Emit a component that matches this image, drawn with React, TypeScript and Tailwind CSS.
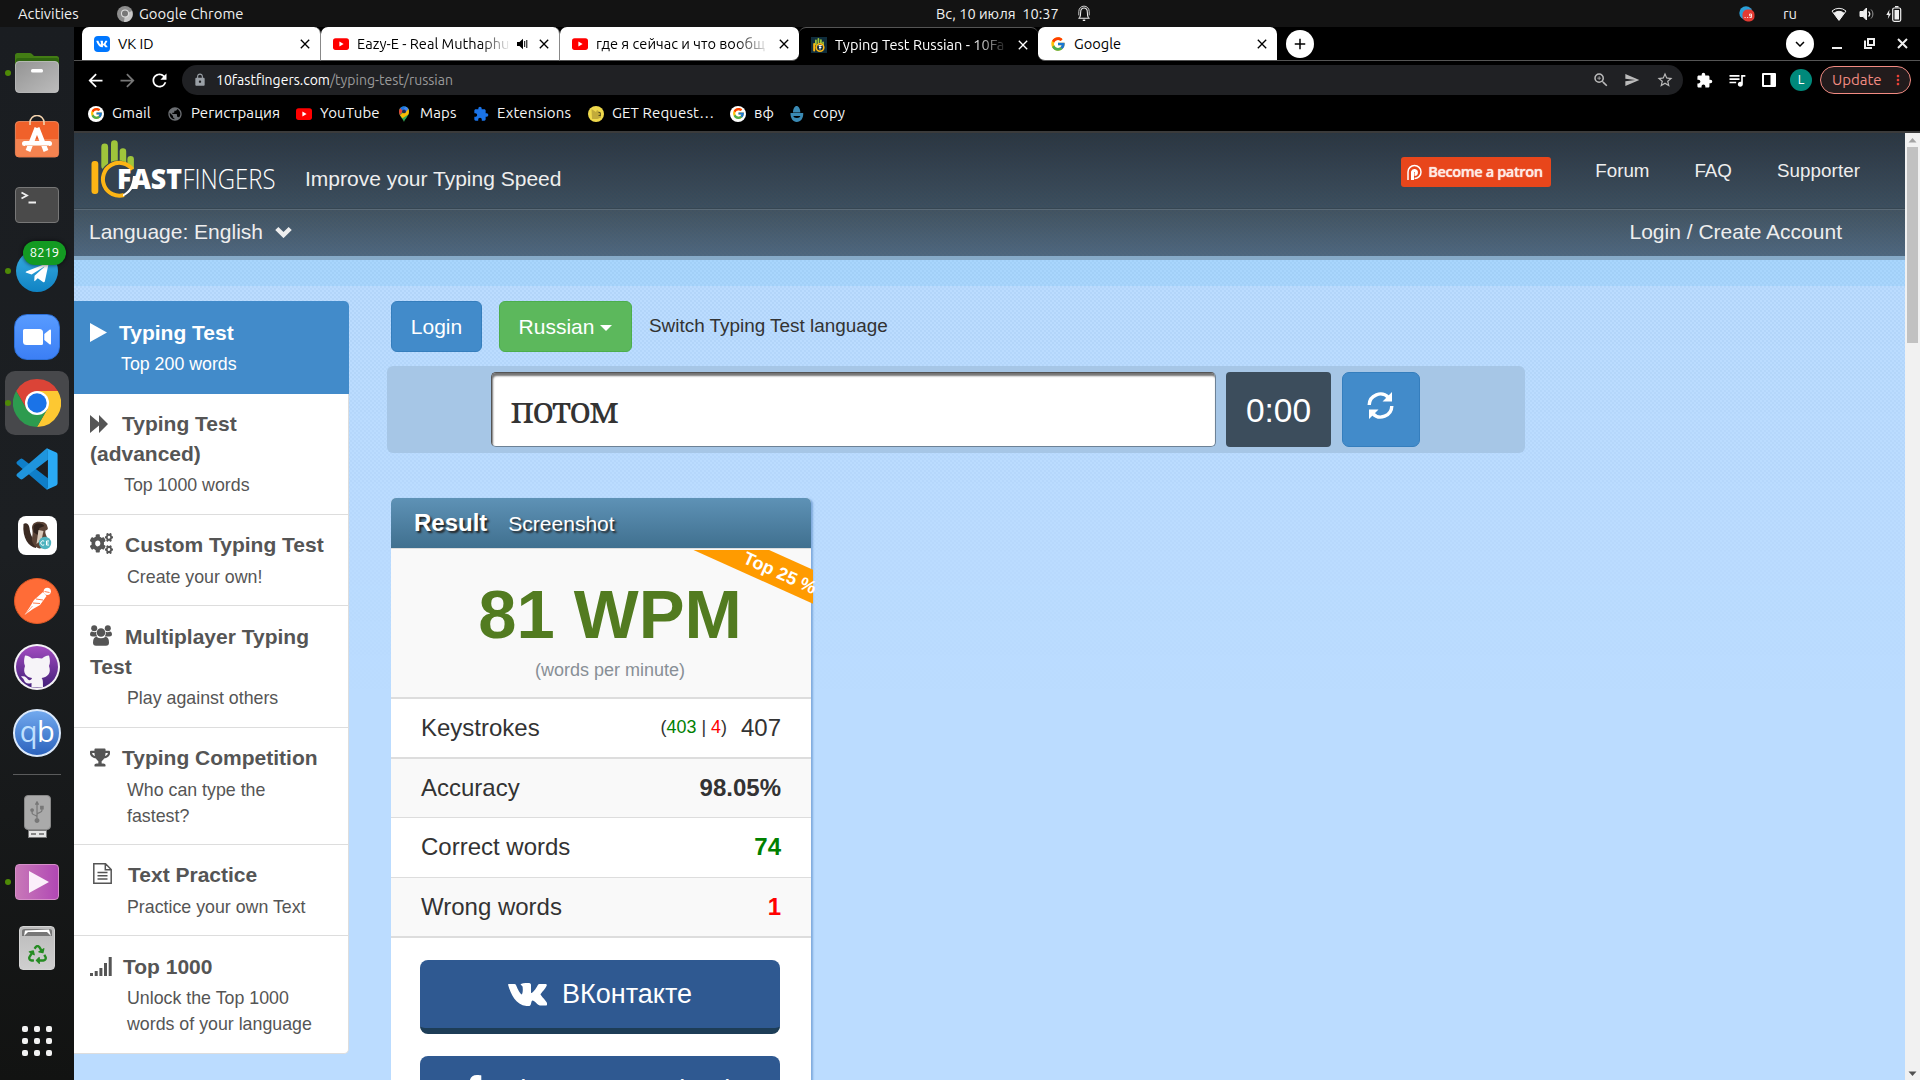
import React from 'react';
import {
  MdArrowBack, MdArrowForward, MdRefresh, MdLock, MdExtension, MdQueueMusic, MdSend,
  MdStarBorder, MdZoomIn, MdClose, MdAdd, MdExpandMore, MdMoreVert, MdPublic,
} from 'react-icons/md';
import {
  FaTelegramPlane, FaUsb, FaRecycle, FaVk, FaFacebookF, FaCogs, FaTrophy,
} from 'react-icons/fa';
import { FcGoogle } from 'react-icons/fc';

const UI = "font-['Ubuntu','Noto_Sans',sans-serif]";
const ARIAL = "font-['Liberation_Sans',Arial,sans-serif]";

/* ---------- small icons ---------- */

function YouTubeIcon() {
  return (
    <svg viewBox="0 0 16 16" className="h-4 w-4 shrink-0">
      <rect x="0" y="2.3" width="16" height="11.6" rx="2.6" fill="#f00" />
      <path d="M6.4 5.6 10.6 8.1 6.4 10.6Z" fill="#fff" />
    </svg>
  );
}

function VkIcon() {
  return (
    <span className="flex h-4 w-4 shrink-0 items-center justify-center rounded-[4px] bg-[#0077ff]">
      <FaVk className="h-3 w-3 text-white" />
    </span>
  );
}

function GoogleBadge() {
  return (
    <span className="flex h-4 w-4 shrink-0 items-center justify-center rounded-full bg-white">
      <FcGoogle className="h-[13px] w-[13px]" />
    </span>
  );
}

function FingersIcon() {
  return (
    <svg viewBox="0 0 16 16" className="h-4 w-4 shrink-0">
      <rect width="16" height="16" fill="#0f2d3c" />
      <g fill="#9fc53b">
        <rect x="4" y="2.5" width="1.8" height="6" rx=".9" />
        <rect x="6.5" y="1" width="1.8" height="6" rx=".9" />
        <rect x="9" y="2.2" width="1.8" height="6" rx=".9" />
        <rect x="11.3" y="4.5" width="1.6" height="5" rx=".8" />
      </g>
      <rect x="2.2" y="6" width="2" height="8.5" rx="1" fill="#fdb913" />
      <circle cx="9" cy="10.5" r="3.8" fill="#16303c" stroke="#fdb913" strokeWidth="1.6" />
      <path d="M7.6 8.6h3.2M9 8.6v4M8 10.5h2.4" stroke="#fff" strokeWidth="1" />
    </svg>
  );
}

function MapsPin() {
  return (
    <svg viewBox="0 0 16 16" className="h-4 w-4 shrink-0">
      <path d="M8 16C7.4 13 3 10 3 5.4A5 5 0 0 1 8 .4a5 5 0 0 1 5 5C13 10 8.600 13 8 16Z" fill="#34a853" />
      <path d="M3.700 2.800A5 5 0 0 1 9.600.6L5.500 6Z" fill="#1a73e8" />
      <path d="M3 5.400A5 5 0 0 1 4.200 2.200L7 5 4 9.300C3.400 8 3 6.800 3 5.400Z" fill="#ea4335" />
      <path d="M4 9.200 12 2.500C13.200 4.200 13.200 6.500 12.300 8.400L6.500 12.300Z" fill="#fbbc04" />
      <path d="M9.600.600A5 5 0 0 1 12.400 3L9.500 6.500 7 3.500Z" fill="#4285f4" />
      <circle cx="8" cy="5.400" r="1.900" fill="#1d2b4f" />
    </svg>
  );
}

function YellowBadge() {
  return (
    <svg viewBox="0 0 16 16" className="h-4 w-4 shrink-0">
      <circle cx="8" cy="8" r="8" fill="#efd94c" />
      <path d="M3.500 3 8 6l1-2 4 2.500v5L9.500 13H4Z" fill="#c2ab3a" />
      <path d="M10.500 6.500h1.800M10.500 9.500h1.800M12.300 7v3" stroke="#4b4318" strokeWidth=".9" />
    </svg>
  );
}

function CopyIcon() {
  return (
    <svg viewBox="0 0 16 16" className="h-4 w-4 shrink-0" fill="#3a8ab4">
      <path d="M4 6.500C4 2.500 5.800 0 7.600 0S11.300 2.500 11.300 6.500Z" />
      <path d="M1.500 7h12.700c.5 5-2.500 9-6.400 9S1.300 12 1.500 7Zm2.800 3c.3 1.300 1.700 2 3.600 2s3.200-.7 3.500-2Z" />
    </svg>
  );
}

function ChromeLogo({ className }: { className: string }) {
  return (
    <svg viewBox="0 0 48 48" className={className}>
      <path d="M24 12H44.785A24 24 0 0 0 3.215 12L13.600 30Z" fill="#db4437" />
      <path d="M34.400 30 24 48A24 24 0 0 0 44.785 12H24Z" fill="#fdc832" />
      <path d="M13.600 30 3.215 12A24 24 0 0 0 24 48L34.400 30Z" fill="#2d9b4f" />
      <circle cx="24" cy="24" r="12" fill="#fff" />
      <circle cx="24" cy="24" r="9.700" fill="#1a73e8" />
    </svg>
  );
}

function GroupIcon() {
  return (
    <svg viewBox="0 0 22 21" className="h-[21px] w-[22px]" fill="currentColor">
      <circle cx="4.200" cy="3.200" r="3" />
      <circle cx="17.800" cy="3.200" r="3" />
      <path d="M0 9.500C0 7.800 1 6.500 2 6.500 3.500 7.500 5 7.500 6.200 6.800 6 9 6.500 10.300 7.300 11.600H2.500Q0 11.600 0 9.500Z" />
      <path d="M22 9.500C22 7.800 21 6.500 20 6.500 18.500 7.500 17 7.500 15.800 6.800 16 9 15.500 10.300 14.700 11.600H19.500Q22 11.600 22 9.500Z" />
      <circle cx="11" cy="7.500" r="4.300" />
      <path d="M3 17.500C3 14 4.500 11.800 6.500 11.800 9.500 13.800 12.500 13.800 15.500 11.800 17.500 11.800 19 14 19 17.500Q19 20.700 16 20.700H6Q3 20.700 3 17.500Z" />
    </svg>
  );
}

/* ---------- desktop top bar ---------- */

function TopBar() {
  return (
    <div className={`${UI} flex h-[27px] shrink-0 items-center bg-[#131313] pt-px text-[14.800px] text-[#f0f0f0]`}>
      <div className="flex w-[640px] items-center pl-[18px]">
        <span className="w-[99px]">Activities</span>
        <svg viewBox="0 0 16 16" className="mr-[6px] h-4 w-4">
          <circle cx="8" cy="8" r="8" fill="#8d8d8d" />
          <path d="M8 8 15 5A8 8 0 0 1 7 16Z" fill="#c9c9c9" />
          <circle cx="8" cy="7.500" r="4" fill="#e0e0e0" />
          <circle cx="8" cy="7.500" r="3" fill="#777" />
        </svg>
        <span className="tracking-[0.050px]">Google Chrome</span>
      </div>
      <div className="flex w-[640px] items-center pb-px pl-[296px]">
        <span className="w-[140px] whitespace-pre text-[14.600px]">Вс, 10 июля  10:37</span>
        <svg viewBox="0 0 16 18" className="h-[17px] w-4" fill="none" stroke="#f0f0f0" strokeWidth="1.100">
          <path d="M2 14H14M3.300 13.500C4.500 12 4.500 10.500 4.500 7.500 4.500 4.800 6 3.200 8 3.200S11.500 4.800 11.500 7.500C11.500 10.500 11.500 12 12.700 13.500" />
          <path d="M2.500 11V7C2.500 3.500 5 1.200 8 1.200S13.500 3.500 13.500 7V11" strokeWidth=".9" />
          <path d="M6.700 16.200h2.600" strokeWidth="1.500" />
        </svg>
      </div>
      <div className="flex flex-1 items-center pb-px pl-[459px]">
        <svg viewBox="0 0 16 16" className="mr-[28px] h-4 w-4">
          <circle cx="7" cy="7" r="6.700" fill="#2a9fd8" />
          <rect x="3.500" y="3.500" width="12" height="12" rx="5" fill="#e33b33" />
          <path d="M5.500 11.500h1.200M8 11.500h1.200M10.500 8h2v3.500h-2M10.500 8v1.800h2" stroke="#fff" strokeWidth=".8" fill="none" />
        </svg>
        <span className="w-[48px] pt-px">ru</span>
        <svg viewBox="0 0 16 16" className="mr-[12px] h-4 w-4" fill="none" stroke="#f0f0f0">
          <path d="M1 5A10.500 10.500 0 0 1 15 5L8 14.500Z" strokeWidth="1" />
          <path d="M3 7.200a7.500 7.500 0 0 1 10 0L8 14Z" fill="#f0f0f0" />
        </svg>
        <svg viewBox="0 0 16 16" className="mr-[11px] h-4 w-4" fill="none" stroke="#f0f0f0">
          <path d="M1 5.500h3L7.500 2v12L4 10.500H1Z" fill="#f0f0f0" />
          <path d="M9.500 5.500c1.500 1.500 1.500 3.500 0 5" strokeWidth="1.300" />
          <path d="M12 3.500c2.500 2.500 2.500 6.500 0 9" strokeWidth="1" opacity=".6" />
        </svg>
        <svg viewBox="0 0 16 16" className="h-4 w-4">
          <path d="M3.500 3.500.300 9H2.500L1.800 13 5 7.500H3Z" fill="#f0f0f0" />
          <rect x="6.700" y="2" width="8" height="13.300" rx="1.500" fill="none" stroke="#f0f0f0" strokeWidth="1.200" />
          <rect x="8.500" y="4" width="4.500" height="9.500" fill="#f0f0f0" />
          <path d="M9 .7h3.500" stroke="#f0f0f0" strokeWidth="1.400" />
        </svg>
      </div>
    </div>
  );
}

/* ---------- dock ---------- */

function DockItem({ children, running, active }: { children: React.ReactNode; running?: boolean; active?: boolean }) {
  return (
    <div className="relative flex h-[66px] w-full shrink-0 items-center justify-center">
      {active && <div className="absolute top-px left-[5px] h-16 w-16 rounded-[10px] bg-[#47484b]" />}
      {running && <div className="absolute top-[30px] left-[5px] h-[6px] w-[6px] rounded-full bg-[#4e8a06]" />}
      <div className="relative flex items-center justify-center">{children}</div>
    </div>
  );
}

function Dock() {
  return (
    <div className="flex w-[74px] shrink-0 flex-col bg-linear-to-b from-[#1a1d21] via-[#1c1f22] to-[#121312] pt-[13px]">
      <DockItem running>
        <svg viewBox="0 0 48 48" className="h-12 w-12">
          <path d="M2 12V6.500Q2 4 4.500 4H17Q18.500 4 19.500 5.500L21 7H43.500Q46 7 46 9.500V20H2Z" fill="#437d14" />
          <path d="M3 11Q3 9 5 9H43Q46 9 46 12V20H2Z" fill="#2f6410" />
          <rect x="2.500" y="12.500" width="43" height="31" rx="3.500" fill="url(#fg)" stroke="#c9c9c9" strokeWidth=".8" />
          <rect x="18" y="20" width="12" height="3.500" rx="1.500" fill="#fff" />
          <defs><linearGradient id="fg" x1="0" y1="0" x2="1" y2="1"><stop stopColor="#949494" /><stop offset="1" stopColor="#bcbcbc" /></linearGradient></defs>
        </svg>
      </DockItem>
      <DockItem>
        <svg viewBox="0 0 48 48" className="h-12 w-12">
          <rect x="2.400" y="6.500" width="43.200" height="35.500" rx="3.500" fill="#f0612a" stroke="#f79468" strokeWidth=".8" />
          <path d="M2.800 24H45.200V38.500Q45.200 41.600 42 41.600H6Q2.800 41.600 2.800 38.500Z" fill="#f48350" />
          <path d="M17 10V7.500a7 7 0 0 1 14 0V10" fill="none" stroke="#f3d3ae" strokeWidth="1.600" />
          <path d="M24 13 15 36M24 13 33 36" stroke="#fff" strokeWidth="5" />
          <path d="M11.500 28.500h25" stroke="#fff" strokeWidth="5" strokeLinecap="round" />
          <path d="M12 30.500h24" stroke="#f9c9ae" strokeWidth="1" />
        </svg>
      </DockItem>
      <DockItem>
        <div className="h-9 w-11 rounded-[4px] border border-[#777] bg-[#4a4a4a]">
          <svg viewBox="0 0 42 34" className="h-[34px] w-[42px]" fill="none" stroke="#f0f0f0" strokeWidth="1.800">
            <path d="M5.500 4.500 11 7.500 5.500 10.500M12.500 14.500H20" />
          </svg>
        </div>
      </DockItem>
      <DockItem running>
        <div className="flex h-[42px] w-[42px] items-center justify-center rounded-full bg-linear-to-b from-[#36aee2] to-[#0f83c4]">
          <FaTelegramPlane className="mt-[3px] h-[26px] w-[26px] text-white" />
        </div>
        <div className={`${UI} absolute -top-[9px] left-[7px] flex h-6 w-[43px] items-center justify-center rounded-full bg-[#139a22] text-[13px] text-white shadow-[0_0_4px_rgba(0,0,0,.7)]`}>8219</div>
      </DockItem>
      <DockItem>
        <div className="flex h-[46px] w-[46px] items-center justify-center rounded-[13px] border border-[#2d6fd6] bg-linear-to-b from-[#589bff] to-[#3c7ff5]">
          <svg viewBox="0 0 28 16" className="h-4 w-7" fill="#fff">
            <path d="M0 1.500Q0 0 1.500 0H16.500Q20 0 20 3.500V14.500Q20 16 18.500 16H3.500Q0 16 0 12.500Z" />
            <path d="M21.300 5 26.500.800Q28 0 28 1.500V14.500Q28 16 26.500 15.200L21.300 11Z" />
          </svg>
        </div>
      </DockItem>
      <DockItem running active>
        <ChromeLogo className="h-12 w-12" />
      </DockItem>
      <DockItem>
        <svg viewBox="0 0 100 100" className="h-[42px] w-[42px]">
          <path d="M2 33 10 26Q13 24 16 26L76 72V98Q72 99 69 96L2 38Q0 35 2 33Z" fill="#0f7fc9" />
          <path d="M2 67 10 74Q13 76 16 74L76 28V2Q72 1 69 4L2 62Q0 65 2 67Z" fill="#1f95dd" />
          <path d="M72 1.500Q74 .5 76 1.500L96 11Q99 12.500 99 16V84Q99 87.500 96 89L76 98.500Q73 99.500 70 97C73 99 76 97 76 93V7C76 3 73 1 70 3Z" fill="#2aaaf5" />
        </svg>
      </DockItem>
      <DockItem>
        <svg viewBox="0 0 39 39" className="h-[39px] w-[39px]">
          <rect width="39" height="39" rx="8" fill="#fff" />
          <path d="M5.500 8C8 6 11 8 11.500 12c.5 5 2 10 6.500 13v7C11 31 4 22 5.500 8Z" fill="#3b2a22" />
          <path d="M14 12C14 7 18 5 23 6c4 0 6 2 6.500 5 1 2 0 3-2 3.500-1 3 2 6 2 10 0 5-4 8-8 8-4-1-8-5-7.500-10 .5-4 1-6 0-10.500Z" fill="#5b4336" />
          <path d="M15.500 10c3-4 8.500-3 11 0l-5 2-2 7-4-3Z" fill="#2f211b" />
          <path d="M20.500 14l5 1-2 9-5 4Z" fill="#d8c8b8" />
          <circle cx="27" cy="27" r="6.200" fill="#4fb3bf" />
          <path d="M26.200 25.200a2.200 2.200 0 1 0 0 3.600M31 25h-2.500v4H31M28.500 27h2" stroke="#fff" fill="none" />
        </svg>
      </DockItem>
      <DockItem>
        <svg viewBox="0 0 46 46" className="h-[46px] w-[46px]">
          <circle cx="23" cy="23" r="22.500" fill="#ff6c37" stroke="#e05a26" />
          <circle cx="33.300" cy="13.300" r="3.600" fill="#fff" />
          <path d="M29 14 32.500 18 26 27 19 31 10.500 37 15.500 29.500 20 22Z" fill="#fff" />
          <path d="M22 21l7 1M19 25l7 .5M30.500 13.500l5 1" stroke="#ff6c37" strokeWidth=".9" />
          <path d="M18.500 28 12 35.500" stroke="#ff6c37" strokeWidth=".6" />
        </svg>
      </DockItem>
      <DockItem>
        <div className="flex h-[46px] w-[46px] items-center justify-center rounded-full bg-[#f4f2f6]">
          <svg viewBox="0 0 46 46" className="h-[46px] w-[46px]">
            <defs><linearGradient id="gh" x1="0" y1="0" x2="0" y2="1"><stop stopColor="#a24cc0" /><stop offset="1" stopColor="#43207a" /></linearGradient></defs>
            <circle cx="23" cy="23" r="21" fill="url(#gh)" />
            <path d="M11 22C9.500 19 10 15 11 11.500 14 11.500 16.500 13 18 14.500 21 13.700 25 13.700 28 14.500 29.500 13 32 11.500 35 11.500 36 15 36.500 19 35 22 37.500 29 34 33 27.500 34 29 35.500 29 37 29 43.500H17.500V39C13 40.500 11 39 10 36 9 34 8 33.500 7 32.500 11 31.500 13 34 14 35.500 15.500 37 17.500 36 18 34 12 33 8.500 29 11 22Z" fill="#f6f4f8" />
          </svg>
        </div>
      </DockItem>
      <DockItem>
        <div className="flex h-12 w-12 items-center justify-center rounded-full border-2 border-[#dbe9fb] bg-linear-to-b from-[#72a9ee] to-[#2c63bd]">
          <span className="pb-[5px] font-['Open_Sans',sans-serif] text-[29px] leading-[30px] tracking-[-0.500px] text-white"><span className="text-[#bfe0ff]">q</span>b</span>
        </div>
      </DockItem>
      <div className="flex h-[17px] shrink-0 items-center justify-center pb-px"><div className="h-px w-12 bg-[#5a5b5c]" /></div>
      <DockItem>
        <div className="flex flex-col items-center">
          <div className="flex h-[35px] w-[27px] items-center justify-center rounded-[4px] border border-[#888] bg-[#aaa]">
            <FaUsb className="h-[22px] w-[22px] -rotate-90 text-[#777]" />
          </div>
          <div className="flex h-[8px] w-[19px] items-center justify-center gap-[3px] border border-[#777] bg-[#e6e6e6]">
            <span className="h-[2px] w-[5px] bg-[#888]" /><span className="h-[2px] w-[5px] bg-[#888]" />
          </div>
        </div>
      </DockItem>
      <DockItem running>
        <div className="flex h-9 w-11 items-center justify-center rounded-[4px] border border-[#d58fc8] bg-linear-to-r from-[#c878b8] to-[#b147b4]">
          <svg viewBox="0 0 20 22" className="ml-[3px] h-[22px] w-5"><path d="M0 0 20 11 0 22Z" fill="#fbeffa" /></svg>
        </div>
      </DockItem>
      <DockItem>
        <div className="flex h-11 w-9 flex-col items-center rounded-[4px] border border-[#d4d4d4] bg-linear-to-b from-[#bbb] to-[#cfcfcf]">
          <svg viewBox="0 0 32 9" className="mt-px h-[9px] w-8"><path d="M1 8V3Q1 1 4 1H28Q31 1 31 3V8Z" fill="#777" /><path d="M3 8 4 2.500 28 1.500 30 8 26 4 7 4Z" fill="#fff" /></svg>
          <FaRecycle className="mt-[8px] h-[19px] w-[19px] text-[#258b22]" />
        </div>
      </DockItem>
      <div className="flex flex-1 justify-center pt-[45px]">
        <div className="grid grid-cols-3 content-start gap-[6px]">
          {Array.from({ length: 9 }, (_, i) => <span key={i} className="h-[6px] w-[6px] rounded-[2px] bg-[#f2f2f2]" />)}
        </div>
      </div>
    </div>
  );
}

/* ---------- browser chrome ---------- */

type TabProps = { icon: React.ReactNode; title: string; active?: boolean; audio?: boolean; shape: string; fade?: string };

function Tab({ icon, title, active, audio, shape, fade = '' }: TabProps) {
  return (
    <div className={`flex h-[34px] w-[239px] shrink-0 items-center pr-[7px] pl-[12px] ${shape} ${active ? 'border-t border-[#555] bg-black text-white' : 'border-b border-[#555] bg-white pt-px text-black'}`}>
      {icon}
      <span className={`ml-2 flex-1 text-[14.600px] whitespace-nowrap ${fade}`}>{title}</span>
      {audio && (
        <svg viewBox="0 0 12 12" className="mr-[7px] ml-[6px] h-3 w-3 shrink-0">
          <path d="M0 4H2.500L6 .800V11.200L2.500 8H0Z" fill="#000" />
          <path d="M7.700 3v6M9.800 2v8" stroke="#000" strokeWidth="1" />
        </svg>
      )}
      <MdClose className={`h-4 w-4 shrink-0 ${audio ? '' : 'ml-[6px]'}`} />
    </div>
  );
}

function TabStrip() {
  return (
    <div className="flex h-[34px] shrink-0 bg-black">
      <div className="h-full w-2 border-b border-[#555]" />
      <Tab icon={<VkIcon />} title="VK ID" shape="rounded-t-[7px] border-r border-r-[#888]" />
      <Tab icon={<YouTubeIcon />} title="Eazy-E - Real Muthaphu" audio fade="mask-r-from-80%" shape="rounded-t-[7px] border-r border-r-[#888]" />
      <Tab icon={<YouTubeIcon />} title="где я сейчас и что вообщ" fade="mask-r-from-80%" shape="rounded-t-[7px] rounded-br-[7px]" />
      <Tab icon={<FingersIcon />} title="Typing Test Russian - 10Fa" active fade="mask-r-from-80%" shape="rounded-t-[7px]" />
      <Tab icon={<FcGoogle className="h-4 w-4 shrink-0" />} title="Google" shape="rounded-t-[7px] rounded-bl-[7px]" />
      <div className="flex flex-1 items-center border-b border-[#555] pr-[12px] pl-[9px]">
        <span className="flex h-7 w-7 items-center justify-center rounded-full bg-white"><MdAdd className="h-[18px] w-[18px] text-black" /></span>
        <span className="ml-auto flex h-7 w-7 items-center justify-center rounded-full bg-white"><MdExpandMore className="h-[18px] w-[18px] text-black" /></span>
        <span className="mt-2 ml-[18px] h-[2px] w-[10px] bg-[#eee]" />
        <svg viewBox="0 0 11 11" className="ml-[22px] h-[11px] w-[11px]" fill="none" stroke="#eee" strokeWidth="2"><path d="M4 1h6v6H4ZM1 2.500V10H8" /></svg>
        <svg viewBox="0 0 11 11" className="ml-[22px] h-[11px] w-[11px]" stroke="#eee" strokeWidth="2"><path d="M1 1 10 10M10 1 1 10" /></svg>
      </div>
    </div>
  );
}

function Toolbar() {
  return (
    <div className="flex h-[38px] shrink-0 items-center bg-black text-white">
      <MdArrowBack className="ml-[11px] h-[21px] w-[21px]" />
      <MdArrowForward className="ml-[11px] h-[21px] w-[21px] text-[#777]" />
      <MdRefresh className="ml-[11px] h-[21px] w-[21px]" />
      <div className="ml-[12px] flex h-[30px] w-[1501px] items-center rounded-full bg-[#202124] pr-[9px] pl-[11px]">
        <MdLock className="h-[14px] w-[14px] text-[#9aa0a6]" />
        <span className="ml-[9px] text-[14px] text-white">10fastfingers.com<span className="text-[#9a9a9a]">/typing-test/russian</span></span>
        <MdZoomIn className="ml-auto h-[18px] w-[18px] text-[#bbb]" />
        <MdSend className="ml-[14px] h-4 w-4 text-[#bbb]" />
        <MdStarBorder className="ml-[16px] h-[18px] w-[18px] text-[#bbb]" />
      </div>
      <MdExtension className="ml-[13px] h-[17px] w-[17px]" />
      <MdQueueMusic className="ml-[14px] h-5 w-5" />
      <svg viewBox="0 0 14 14" className="ml-[15px] h-[14px] w-[14px]"><rect width="14" height="14" rx="1" fill="#fff" /><rect x="2" y="2" width="6.500" height="10" fill="#000" /></svg>
      <span className="ml-[14px] flex h-[22px] w-[22px] items-center justify-center rounded-full bg-[#00897b] text-[13px]">L</span>
      <div className="ml-[8px] flex h-7 w-[91px] shrink-0 items-center rounded-full border border-[#f28b82] bg-[#221b1c] pl-[11px] text-[15px] text-[#f28b82]">
        Update
        <MdMoreVert className="ml-[8px] h-4 w-4 shrink-0 text-[#ee4237]" />
      </div>
    </div>
  );
}

function Bookmark({ icon, label, width }: { icon: React.ReactNode; label: string; width: string }) {
  return (
    <div className={`flex shrink-0 items-center gap-[8px] whitespace-nowrap ${width}`}>
      {icon}
      <span>{label}</span>
    </div>
  );
}

function Bookmarks() {
  return (
    <div className="flex h-[34px] shrink-0 items-center border-b-2 border-[#3b3b3b] bg-black pb-[3px] pl-[14px] text-[15px] tracking-[0.120px] text-[#f5f5f5]">
      <Bookmark icon={<GoogleBadge />} label="Gmail" width="w-[79px]" />
      <Bookmark icon={<MdPublic className="h-4 w-4 text-[#6b6e72]" />} label="Регистрация" width="w-[129px]" />
      <Bookmark icon={<YouTubeIcon />} label="YouTube" width="w-[100px]" />
      <Bookmark icon={<MapsPin />} label="Maps" width="w-[77px]" />
      <Bookmark icon={<MdExtension className="h-4 w-4 text-[#1a73e8]" />} label="Extensions" width="w-[115px]" />
      <Bookmark icon={<YellowBadge />} label="GET Request…" width="w-[142px]" />
      <Bookmark icon={<GoogleBadge />} label="вф" width="w-[59px]" />
      <Bookmark icon={<CopyIcon />} label="copy" width="w-[80px]" />
    </div>
  );
}

/* ---------- page ---------- */

const CHECK = 'bg-[repeating-conic-gradient(rgba(0,60,120,.045)_0_25%,transparent_0_50%)] bg-[length:4px_4px]';

function SiteLogo() {
  return (
    <svg viewBox="90 139 188 60" className="h-[60px] w-[188px] overflow-visible">
      <g fill="#9fc53b">
        <rect x="101.300" y="143.500" width="6.800" height="26" rx="3.400" />
        <rect x="111" y="140.300" width="6.800" height="24" rx="3.400" />
        <rect x="119.700" y="148.300" width="6.500" height="20" rx="3.200" />
        <rect x="127.400" y="156" width="6.500" height="16" rx="3.200" />
      </g>
      <circle cx="118" cy="179" r="18.500" fill="#34424f" />
      <rect x="91.500" y="161" width="6.800" height="33" rx="3" fill="#fdb515" />
      <path d="M132.500 169.500A16.400 16.400 0 1 0 124 195" fill="none" stroke="#fdb515" strokeWidth="4" />
      <path d="M123 196.500C130 193 133 189 135.500 182L137 176 133 176C132 186 129 191 123 194.500Z" fill="#fff" />
      <g fill="#fff" fontFamily="'Open Sans', sans-serif" fontSize="28">
        <text x="117" y="189" fontWeight="800" textLength="65" lengthAdjust="spacingAndGlyphs">FAST</text>
        <text x="182.500" y="189" fontWeight="300" textLength="93" lengthAdjust="spacingAndGlyphs">FINGERS</text>
      </g>
    </svg>
  );
}

function SiteHeader() {
  return (
    <div className="flex shrink-0 flex-col text-[#eee]">
      <div className="h-[76px] bg-linear-to-b from-[#2c3640] to-[#3e4f5e]">
        <div className={`flex h-full border-b border-[#364652] ${CHECK}`}>
          <div className="pt-[6px] pl-4"><SiteLogo /></div>
          <div className="mt-[33px] ml-[27px] text-[21px] leading-[25px]">Improve your Typing Speed</div>
          <div className="mt-[24px] mr-[45px] ml-auto flex h-[30px] items-center text-[18.750px]">
            <div className="mr-[44px] flex h-[30px] w-[150px] items-center rounded-[3px] bg-[#e8461b] pl-[5px]">
              <svg viewBox="0 0 17 17" className="mr-[5px] h-[17px] w-[17px]" fill="none" stroke="#fff">
                <path d="M2 16V8a6.500 6.500 0 1 1 6.500 6.500" strokeWidth="1.500" />
                <path d="M6.500 16V8a2 2 0 1 1 2 2.500" strokeWidth="3" />
              </svg>
              <span className="font-['Open_Sans',sans-serif] text-[14.500px] font-semibold tracking-[-0.350px] text-[#ffe9e2] [text-shadow:0_0_1px_#fff]">Become a patron</span>
            </div>
            <span className="mr-[45px] pb-[2px]">Forum</span>
            <span className="mr-[45px] pb-[2px]">FAQ</span>
            <span className="pb-[2px] tracking-[0.080px]">Supporter</span>
          </div>
        </div>
      </div>
      <div className="h-[47px] bg-linear-to-b from-[#43535f] to-[#50687f]">
        <div className={`flex h-full items-center border-t border-[#5a6a77] pr-[63px] pb-[3px] pl-[15px] text-[21px] ${CHECK}`}>
          <span>Language: English</span>
          <svg viewBox="0 0 17 12" className="ml-[12px] h-3 w-[17px]" fill="none" stroke="#eee" strokeWidth="4.500"><path d="M1.800 2.500 8.500 9 15.200 2.500" /></svg>
          <span className="ml-auto">Login / Create Account</span>
        </div>
      </div>
      <div className="h-[4px] bg-[#86aac8]" />
      <div className="h-[26px] bg-[#a9d6fd]"><div className={`h-full ${CHECK}`} /></div>
    </div>
  );
}

type Entry = { icon: React.ReactNode; title: string; sub: string; box: string; gap: string; indent: string; active?: boolean };

const ENTRIES: Entry[] = [
  { icon: <svg viewBox="0 0 17 19" className="h-[19px] w-[17px]" fill="currentColor"><path d="M0 0 17 9.500 0 19Z" /></svg>, title: 'Typing Test', sub: 'Top 200 words', box: 'h-[93px] pt-[17px] rounded-tr-[5px] pr-4', gap: 'mr-[12px]', indent: 'mt-1 pl-[31px]', active: true },
  { icon: <svg viewBox="0 0 18 18" className="h-[18px] w-[18px]" fill="currentColor"><path d="M0 0 9 7.500V0L18 9 9 18V10.500L0 18Z" /></svg>, title: 'Typing Test (advanced)', sub: 'Top 1000 words', box: 'h-[121px] pt-[15px] pr-[60px] border-b', gap: 'mr-[14px]', indent: 'mt-1 pl-[34px]' },
  { icon: <FaCogs preserveAspectRatio="none" className="h-[21px] w-[23px]" />, title: 'Custom Typing Test', sub: 'Create your own!', box: 'h-[91px] pt-[15px] pr-4 border-b', gap: 'mr-[12px]', indent: 'mt-[5px] pl-[37px]' },
  { icon: <GroupIcon />, title: 'Multiplayer Typing Test', sub: 'Play against others', box: 'h-[122px] pt-[16px] pr-[30px] border-b', gap: 'mr-[13px]', indent: 'mt-1 pl-[37px]' },
  { icon: <FaTrophy className="h-[19px] w-5" />, title: 'Typing Competition', sub: 'Who can type the fastest?', box: 'h-[117px] pt-[15px] pr-4 border-b', gap: 'mr-[12px]', indent: 'mt-[5px] pl-[37px] pr-8' },
  { icon: <svg viewBox="0 0 19 21" className="ml-[3px] h-[21px] w-[19px]" fill="none" stroke="currentColor" strokeWidth="1.500"><path d="M.8.800H12.500L18.200 6.500V20.200H.800ZM12.300.800V6.700H18.200M4.500 9.500h10M4.500 12.800h10M4.500 16h10" /></svg>, title: 'Text Practice', sub: 'Practice your own Text', box: 'h-[91px] pt-[15px] pr-4 border-b', gap: 'mr-[16px]', indent: 'mt-[5px] pl-[37px]' },
  { icon: <svg viewBox="0 0 22 19" className="h-[19px] w-[22px]" fill="currentColor"><path d="M0 16h3v3H0ZM4.700 14h3v5h-3ZM9.400 11h3v8h-3ZM14 6h3v13h-3ZM18.700 0h3v19h-3Z" /></svg>, title: 'Top 1000', sub: 'Unlock the Top 1000 words of your language', box: 'h-[118px] pt-[16px] pr-4 border-b rounded-br-[5px]', gap: 'mr-[11px]', indent: 'mt-1 pl-[37px]' },
];

function Sidebar() {
  return (
    <div className="mt-[15px] w-[275px] shrink-0 self-start">
      {ENTRIES.map((e) => (
        <div key={e.title} className={`border-[#ddd] pl-4 ${e.box} ${e.active ? 'bg-[#428bca] text-white' : 'border-r bg-white text-[#555]'}`}>
          <div className="text-[21px] leading-[30px] font-bold">
            <span className={`inline-block align-[-2px] leading-none ${e.gap}`}>{e.icon}</span>{e.title}
          </div>
          <div className={`text-[17.800px] leading-[25.500px] ${e.indent}`}>{e.sub}</div>
        </div>
      ))}
    </div>
  );
}

function Row({ label, children, box }: { label: string; children: React.ReactNode; box: string }) {
  return (
    <div className={`flex items-center justify-between border-[#ddd] pr-[30px] pb-px pl-[30px] text-[24px] ${box}`}>
      <span>{label}</span>
      {children}
    </div>
  );
}

function ResultCard() {
  return (
    <div className="mt-[45px] ml-1 w-[420px] rounded-t-[5px] bg-white text-[#333] shadow-[2px_1px_2px_rgba(90,140,200,.6)]">
      <div className="flex h-[50px] items-baseline rounded-t-[5px] bg-linear-to-b from-[#5e92b6] to-[#40708f] pt-[10px] pl-[23px] text-white [text-shadow:2px_2px_2px_#222]">
        <span className="text-[24px] leading-[30px] font-bold">Result</span>
        <span className="ml-[21px] text-[21px]">Screenshot</span>
      </div>
      <div className="relative h-[151px] border-t border-b-2 border-[#ddd] bg-[#f9f9f9] pt-[28px] pl-[18px] text-center">
        <div className="text-[68.750px] leading-[75px] font-bold text-[#527b20]">81 WPM</div>
        <div className="mt-[6px] text-[18px] leading-[24px] text-[#888f96]">(words per minute)</div>
        <div className="absolute top-px -right-[2px] h-[54px] w-[120px] overflow-hidden">
          <div className="absolute top-px left-[-20px] h-[31px] w-[190px] rotate-[24.200deg] bg-[#ff9b00]" />
        </div>
        <div className="absolute top-[12px] right-[-10px] w-[82px] rotate-[24.200deg] text-center text-[18px] leading-6 font-bold whitespace-nowrap text-white">Top 25 %</div>
      </div>
      <Row label="Keystrokes" box="h-[60px] border-b-2">
        <span className="flex items-center"><span className="mr-[14px] text-[17.900px]">(<span className="text-[#008000]">403</span> | <span className="text-[#f00]">4</span>)</span>407</span>
      </Row>
      <Row label="Accuracy" box="h-[59px] border-b bg-[#f9f9f9]"><b>98.05%</b></Row>
      <Row label="Correct words" box="h-[60px] border-b"><b className="text-[#008000]">74</b></Row>
      <Row label="Wrong words" box="h-[60px] border-b-2 bg-[#f9f9f9]"><b className="text-[#f00]">1</b></Row>
      <div className="flex flex-col gap-[22px] pt-[22px] pr-[31px] pl-[29px] text-[27px] text-white">
        <div className="flex h-[74px] items-center justify-center rounded-[8px] border-b-[6px] border-[#1d3d57] bg-[#2f5991]">
          <svg viewBox="0 0 39 23" className="mr-[15px] h-[23px] w-[39px]" fill="#fff">
            <path d="M0 1.500Q0 1 1 1H6.500Q7.500 1 8 2C10 7 12 10.500 13.500 11.500 15 11.500 15 5 14.500 3.500 14 2 12.500 2 12.500 1.500 13.500.300 16 0 21 0 22.500.200 23 1 23 2V9.500C23.500 11.500 27 7.500 30 1.800Q30.500 1 31.500 1H37.500Q39.500 1 38.500 3C37.500 5.500 33 10 32.500 11.500 33.500 13.500 38 17.500 39 20 39.500 22 38.500 22.500 37.500 22.500H32C30 22.500 26.500 17.500 24.500 17.500 23 17.500 23.500 22.500 21.500 23 8.500 24 3 12 0 1.500Z" />
          </svg>
          <span>ВКонтакте</span>
        </div>
        <div className="flex h-[74px] items-center justify-center rounded-[8px] border-b-[6px] border-[#1d3d57] bg-[#2f5991]">
          <FaFacebookF className="mr-[18px] h-[31px] w-[22px]" />
          <span className="pt-px">Share on Facebook</span>
        </div>
      </div>
    </div>
  );
}

function Content() {
  return (
    <div className="ml-[38px] flex w-[1138px] flex-col">
      <div className="mt-[15px] ml-1 flex h-[51px] items-center">
        <div className="flex h-[51px] w-[91px] items-center justify-center rounded-[6px] border border-[#357ebd] bg-[#428bca] text-[21px] text-white">Login</div>
        <div className="ml-[17px] flex h-[51px] w-[133px] items-center justify-center gap-[6px] rounded-[6px] border border-[#4cae4c] bg-[#5cb85c] text-[21px] text-white">
          Russian
          <svg viewBox="0 0 12 6" className="mt-[2px] h-[6px] w-3 shrink-0" fill="#fff"><path d="M0 0H12L6 6Z" /></svg>
        </div>
        <span className="ml-[17px] text-[18.900px] text-[#333]">Switch Typing Test language</span>
      </div>
      <div className="mt-[14px] flex h-[87px] rounded-[6px] bg-[#a6c6e6] pt-[6px] pl-[104px]">
        <div className="h-[75px] w-[725px] rounded-[5px] border border-[#6d8296] border-t-[#555] border-l-[#555] bg-white pt-[11px] pl-[18px] font-['Noto_Serif','DejaVu_Serif_Condensed','DejaVu_Serif',serif] text-[37px] leading-[50px] tracking-[-2px] text-[#333] shadow-[inset_1px_3px_2px_rgba(0,0,0,.55)]">потом</div>
        <div className="ml-[10px] flex h-[75px] w-[105px] items-center justify-center rounded-[4px] bg-[#3c4d5c] pt-[3px] text-[33.500px] text-white">0:00</div>
        <div className="ml-[11px] flex h-[75px] w-[78px] items-start justify-center rounded-[7px] border border-[#357ebd] bg-[#428bca] pt-[19px] pr-px">
          <svg viewBox="0 0 27 27" className="h-[27px] w-[27px]" fill="none" stroke="#fff" strokeWidth="3.400">
            <path d="M2.200 13A11.200 11.200 0 0 1 21.500 5.500M24.800 14A11.200 11.200 0 0 1 5.500 21.500" />
            <path d="M25 0V9.500H15.500ZM2 27V17.500H11.500Z" fill="#fff" stroke="none" />
          </svg>
        </div>
      </div>
      <ResultCard />
    </div>
  );
}

function Scrollbar() {
  return (
    <div className="flex w-[15px] shrink-0 flex-col items-center bg-[#f1f1f1]">
      <svg viewBox="0 0 15 14" className="h-[14px] w-[15px]" fill="#a3a3a3"><path d="M3.500 9.500 7.500 5 11.500 9.500Z" /></svg>
      <div className="h-[196px] w-[11px] bg-[#c1c1c1]" />
      <svg viewBox="0 0 15 14" className="mt-auto h-[14px] w-[15px]" fill="#505050"><path d="M3.500 5.500 7.500 10 11.500 5.500Z" /></svg>
    </div>
  );
}

export default function App() {
  return (
    <div className="flex h-[1080px] w-[1920px] flex-col overflow-hidden bg-black">
      <TopBar />
      <div className="flex h-[1053px]">
        <Dock />
        <div className="flex w-[1846px] flex-col">
          <div className={`${UI} flex flex-col`}>
            <TabStrip />
            <Toolbar />
            <Bookmarks />
          </div>
          <div className="flex h-[947px]">
            <div className={`${ARIAL} flex w-[1831px] flex-col overflow-hidden bg-[#bbdcff]`}>
              <SiteHeader />
              <div className="relative flex">
                <div className={`absolute inset-x-0 top-0 h-[420px] mask-b-from-10% ${CHECK}`} />
                <div className="relative flex">
                  <Sidebar />
                  <Content />
                </div>
              </div>
            </div>
            <Scrollbar />
          </div>
        </div>
      </div>
    </div>
  );
}
